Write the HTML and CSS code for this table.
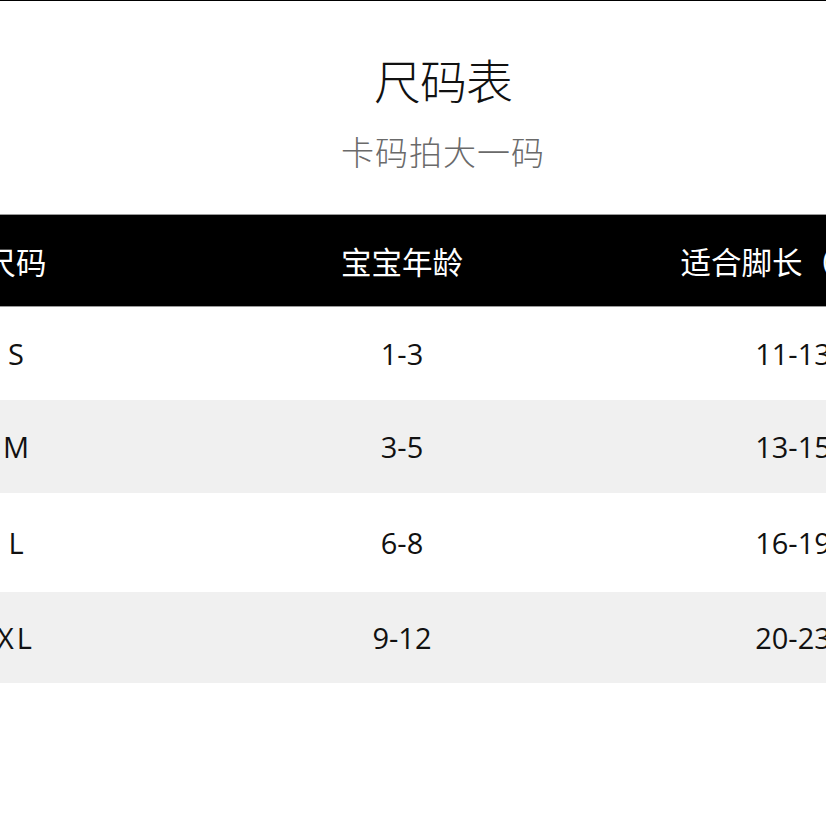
FILE: index.html
```html
<!DOCTYPE html>
<html lang="zh">
<head>
<meta charset="utf-8">
<link rel="stylesheet" href="styles.css">
</head>
<body>
<div class="page">
  <header class="heading">
    <h1 class="title">尺码表</h1>
    <p class="subtitle">卡码拍大一码</p>
  </header>
  <div class="chart">
    <div class="row head">
      <div class="cell">尺码</div>
      <div class="cell">宝宝年龄</div>
      <div class="cell num">适合脚长（cm）</div>
    </div>
    <div class="row r1">
      <div class="cell">S</div>
      <div class="cell">1-3</div>
      <div class="cell num">11-13</div>
    </div>
    <div class="row r2 shade">
      <div class="cell">M</div>
      <div class="cell">3-5</div>
      <div class="cell num">13-15</div>
    </div>
    <div class="row r3">
      <div class="cell">L</div>
      <div class="cell">6-8</div>
      <div class="cell num">16-19</div>
    </div>
    <div class="row r4 shade">
      <div class="cell xl">XL</div>
      <div class="cell">9-12</div>
      <div class="cell num">20-23</div>
    </div>
  </div>
</div>
</body>
</html>
```

FILE: styles.css
```css
html, body {
  margin: 0;
  padding: 0;
  background: #fff;
}
body {
  width: 826px;
  height: 826px;
  overflow: hidden;
  font-family: "Open Sans", "Noto Sans CJK SC", sans-serif;
}
.page {
  border-top: 1px solid #000;
  height: 825px;
  overflow: hidden;
}
.heading {
  display: flex;
  flex-direction: column;
  align-items: center;
  padding-left: 60px;
}
.title {
  margin: 54px 0 0 0;
  font-family: "Noto Sans CJK SC", sans-serif;
  font-weight: 300;
  font-size: 47px;
  line-height: 48px;
  color: #111;
  letter-spacing: -1px;
}
.subtitle {
  margin: 31px 0 0 0;
  font-family: "Noto Sans CJK SC", sans-serif;
  font-weight: 300;
  font-size: 33px;
  line-height: 34px;
  color: #6a6a6a;
  letter-spacing: 1px;
}
.chart {
  margin-top: 46px;
  margin-left: -177px;
  width: 1158px;
}
.row {
  display: grid;
  grid-template-columns: 386px 386px 386px;
  align-items: center;
  height: 93px;
  box-sizing: border-box;
  color: #111;
  font-size: 29px;
}
.cell {
  text-align: center;
  white-space: nowrap;
}
.num {
  padding-left: 10px;
}
.head {
  background: #000;
  color: #fff;
  border-top: 1px solid #9a9a9a;
  border-bottom: 1px solid #9a9a9a;
  font-family: "Noto Sans CJK SC", sans-serif;
  font-weight: 400;
  font-size: 30.5px;
}
.head .num {
  padding-left: 12px;
}
.r3 {
  height: 99px;
}
.r4 {
  height: 91px;
}
.shade {
  background: #f0f0f0;
}
.xl {
  letter-spacing: 3px;
}
```
